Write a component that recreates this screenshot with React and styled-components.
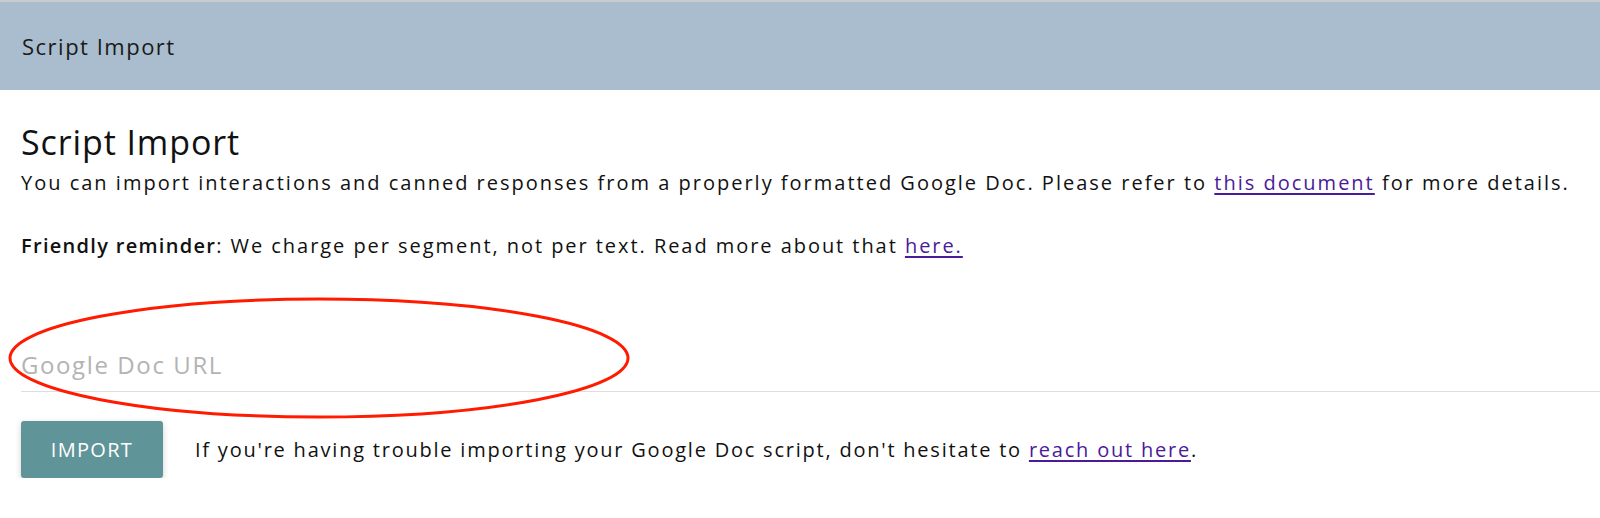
import React from "react"
import styled, { createGlobalStyle } from "styled-components"

const GlobalStyle = createGlobalStyle`
  body {
    margin: 0;
    background: #fff;
    font-family: "Open Sans", "Noto Sans", sans-serif;
    color: #111;
  }
`

const TopBar = styled.header`
  height: 88px;
  border-top: 2px solid #c9cccf;
  background-color: #a9bdce;
  display: flex;
  align-items: center;
  padding-left: 22px;
  font-size: 22px;
  letter-spacing: 1.5px;
  color: #1a1a1a;
`

const Main = styled.main`
  padding: 32px 0 0 21px;
`

const Title = styled.h1`
  font-size: 34px;
  font-weight: 400;
  letter-spacing: 0.9px;
  margin: 0 0 8px 0;
  line-height: 40px;
`

const Text = styled.p`
  font-size: 20px;
  letter-spacing: ${(p) => p.$spacing || "1.95px"};
  line-height: 26px;
  margin: ${(p) => p.$margin || "0"};
`

const Strong = styled.span`
  font-weight: 600;
  letter-spacing: 1.3px;
`

const Link = styled.a`
  color: #4a1a9b;
  text-decoration: underline;
  text-underline-offset: 3px;
  cursor: pointer;
`

const Field = styled.div`
  position: relative;
  margin-top: 91px;
`

const Input = styled.input`
  display: block;
  width: 100%;
  box-sizing: border-box;
  border: none;
  border-bottom: 1px solid #dedede;
  outline: none;
  padding: 0 0 11px 0;
  font-family: inherit;
  font-size: 24px;
  letter-spacing: 1.6px;
  line-height: 30px;
  &::placeholder {
    color: #b3b3b3;
  }
`

const Mark = styled.svg`
  position: absolute;
  left: -22px;
  top: -56px;
  pointer-events: none;
`

const Actions = styled.div`
  display: flex;
  align-items: center;
  gap: 32px;
  margin-top: 29px;
`

const Button = styled.button`
  width: 142px;
  height: 57px;
  flex-shrink: 0;
  border: none;
  border-radius: 3px;
  background-color: #5f9499;
  color: #fff;
  font-family: inherit;
  font-size: 20px;
  letter-spacing: 1.3px;
  box-shadow: 0 2px 6px rgba(0, 0, 0, 0.18);
  cursor: pointer;
`

export default function App() {
  return (
    <>
      <GlobalStyle />
      <TopBar>Script Import</TopBar>
      <Main>
        <Title>Script Import</Title>
        <Text $spacing="2px">
          You can import interactions and canned responses from a properly formatted Google Doc. Please refer to{" "}
          <Link>this document</Link> for more details.
        </Text>
        <Text $margin="37px 0 0 0">
          <Strong>Friendly reminder</Strong>: We charge per segment, not per text. Read more about that{" "}
          <Link>here.</Link>
        </Text>
        <Field>
          <Input placeholder="Google Doc URL" />
          <Mark width="640" height="128" viewBox="0 0 640 128">
            <ellipse cx="320" cy="64" rx="309" ry="59" fill="none" stroke="#ff1a00" strokeWidth="3" />
          </Mark>
        </Field>
        <Actions>
          <Button>IMPORT</Button>
          <Text $spacing="1.78px">
            If you're having trouble importing your Google Doc script, don't hesitate to <Link>reach out here</Link>.
          </Text>
        </Actions>
      </Main>
    </>
  )
}
